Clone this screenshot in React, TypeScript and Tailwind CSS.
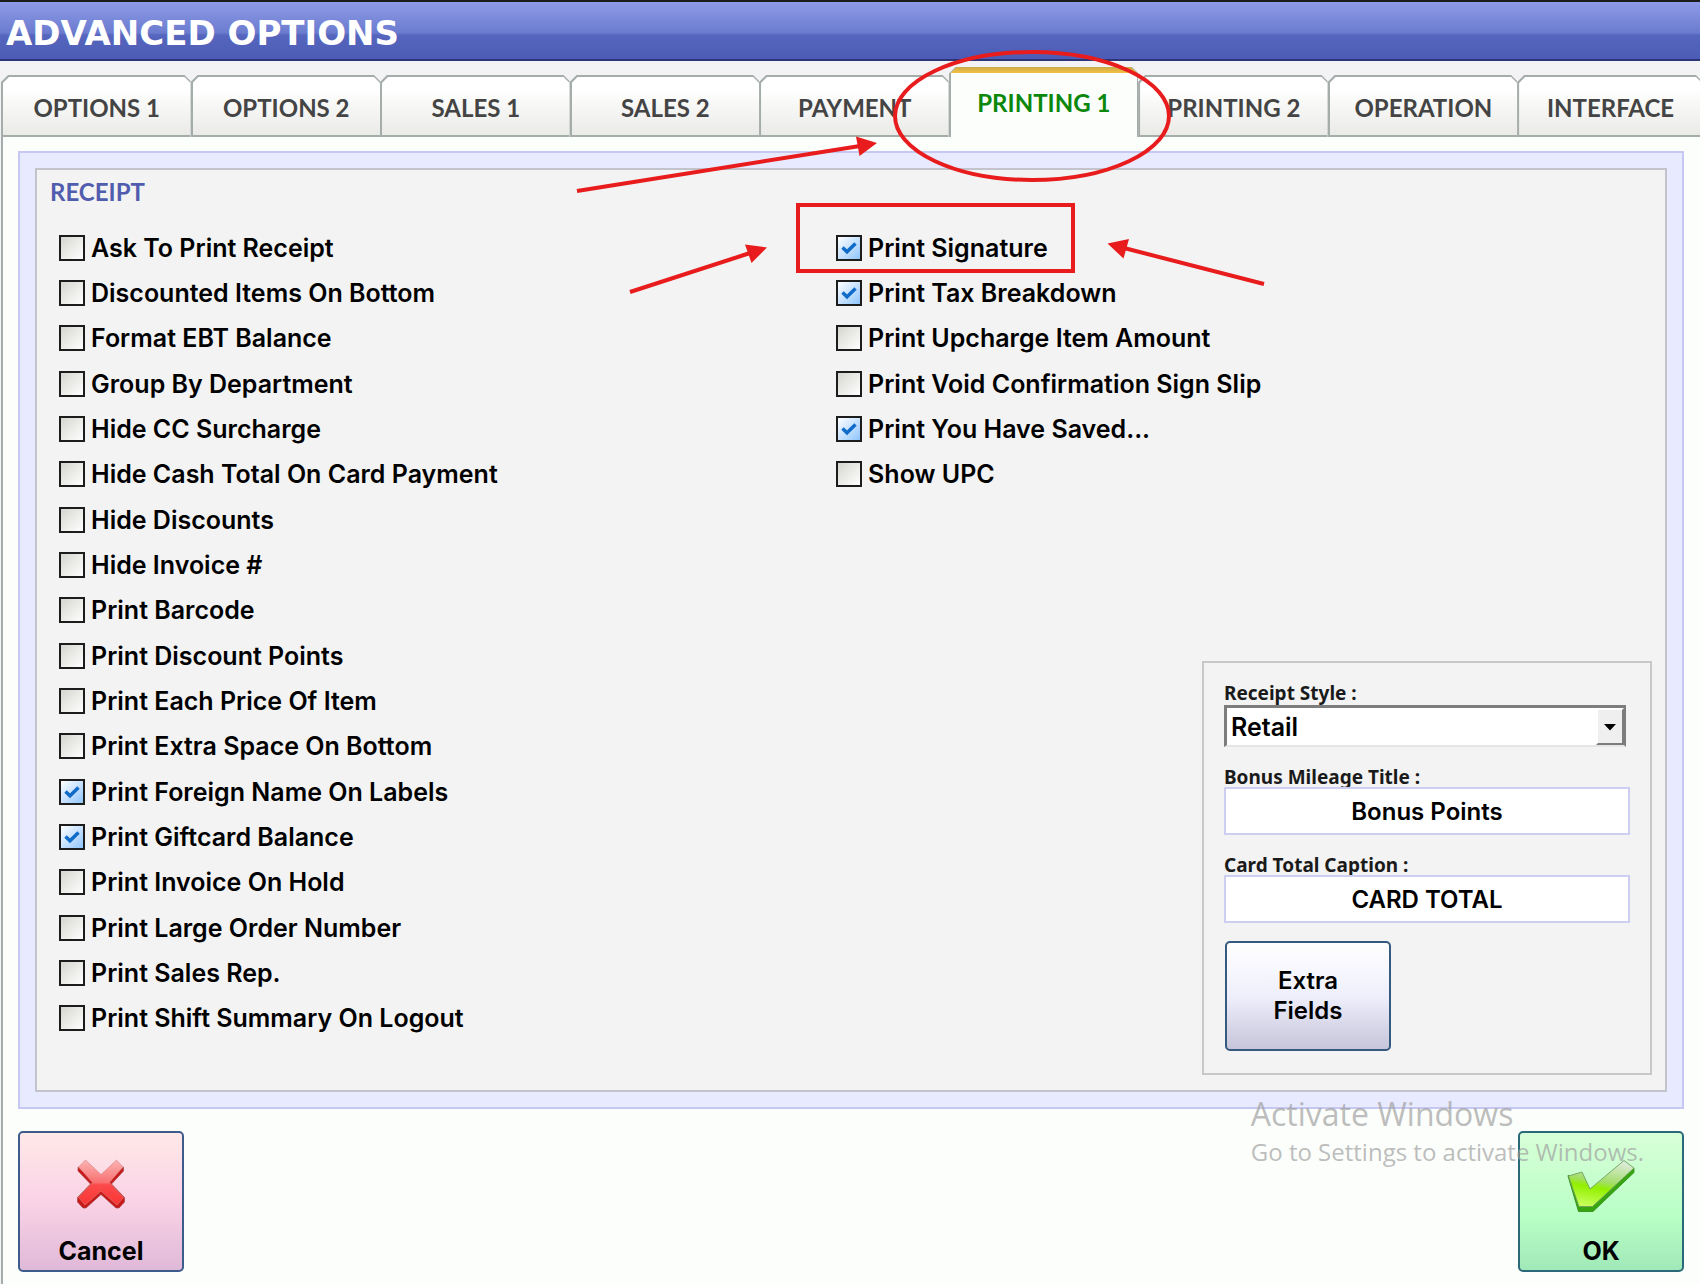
import { useState } from "react";
import clsx from "clsx";

const tabs = [
  "OPTIONS 1",
  "OPTIONS 2",
  "SALES 1",
  "SALES 2",
  "PAYMENT",
  "PRINTING 1",
  "PRINTING 2",
  "OPERATION",
  "INTERFACE",
];

const leftOptions = [
  { label: "Ask To Print Receipt", checked: false },
  { label: "Discounted Items On Bottom", checked: false },
  { label: "Format EBT Balance", checked: false },
  { label: "Group By Department", checked: false },
  { label: "Hide CC Surcharge", checked: false },
  { label: "Hide Cash Total On Card Payment", checked: false },
  { label: "Hide Discounts", checked: false },
  { label: "Hide Invoice #", checked: false },
  { label: "Print Barcode", checked: false },
  { label: "Print Discount Points", checked: false },
  { label: "Print Each Price Of Item", checked: false },
  { label: "Print Extra Space On Bottom", checked: false },
  { label: "Print Foreign Name On Labels", checked: true },
  { label: "Print Giftcard Balance", checked: true },
  { label: "Print Invoice On Hold", checked: false },
  { label: "Print Large Order Number", checked: false },
  { label: "Print Sales Rep.", checked: false },
  { label: "Print Shift Summary On Logout", checked: false },
];

const rightOptions = [
  { label: "Print Signature", checked: true },
  { label: "Print Tax Breakdown", checked: true },
  { label: "Print Upcharge Item Amount", checked: false },
  { label: "Print Void Confirmation Sign Slip", checked: false },
  { label: "Print You Have Saved...", checked: true },
  { label: "Show UPC", checked: false },
];

type Option = { label: string; checked: boolean };

function OptionRow({ label, checked }: Option) {
  return (
    <li className="flex items-center">
      <label className="flex items-center gap-[6px] text-[25px] leading-8 font-semibold whitespace-nowrap">
        <span className="relative flex">
          <input
            type="checkbox"
            defaultChecked={checked}
            className="peer size-[26px] appearance-none border-2 border-[#1c1c1c] bg-linear-to-br from-[#d6d6d0] to-white checked:from-white checked:to-[#8fc4fb]"
          />
          <svg
            viewBox="0 0 26 26"
            className="pointer-events-none absolute inset-0 hidden size-[26px] peer-checked:block"
          >
            <path
              d="M6.5 12.5 L11 16.8 L19.5 8.5"
              fill="none"
              stroke="#0f6bc8"
              strokeWidth="3.4"
            />
          </svg>
        </span>
        {label}
      </label>
    </li>
  );
}

function Tab({
  label,
  active,
  onClick,
}: {
  label: string;
  active: boolean;
  onClick: () => void;
}) {
  return (
    <button
      type="button"
      role="tab"
      aria-selected={active}
      onClick={onClick}
      className={clsx(
        "bg-[#a5adab] pl-[2px] text-2xl font-bold [clip-path:polygon(7px_0,calc(100%-6px)_0,100%_6px,100%_100%,0_100%,0_7px)]",
        active ? "h-[70px] pr-px" : "h-[62px] pt-[2px] pb-[2px]",
      )}
    >
      <span
        className={clsx(
          "flex h-full items-center justify-center [clip-path:polygon(6px_0,calc(100%-6px)_0,100%_6px,100%_100%,0_100%,0_6px)]",
          active
            ? "bg-[linear-gradient(#c9aa4c,#f6c240_6px,#fbfefb_6px)] pt-[2px] text-[#0b870b]"
            : "bg-linear-to-b from-white from-20% to-[#eaebe7] pt-1 text-[#444444]",
        )}
      >
        {label}
      </span>
    </button>
  );
}

function CancelIcon() {
  return (
    <svg width="50" height="50" viewBox="0 0 50 50">
      <defs>
        <linearGradient id="cross" x1="0" y1="0" x2="0" y2="1">
          <stop offset="0" stopColor="#fbb4b4" />
          <stop offset="0.5" stopColor="#f97070" />
          <stop offset="0.55" stopColor="#fb4a4a" />
          <stop offset="1" stopColor="#f93434" />
        </linearGradient>
      </defs>
      <path
        d="M2 8 V12 L14.500 25 L1.500 38.500 V43 L7 49 H10 L25 35.500 L40 49 H43 L48.500 43 V38.500 L35.500 25 L47.500 12 V8 L32 21 H18 Z"
        fill="#c81818"
        stroke="#a04848"
        strokeWidth="0.7"
        strokeLinejoin="round"
      />
      <path
        d="M9.500 1 L2.500 8 L16.500 23.500 L2.500 38.500 L9 46 L25 32 L41 46 L47.500 38.500 L33.500 23.500 L47 8 L40.500 1 L25 15.500 Z"
        fill="url(#cross)"
        stroke="#d98080"
        strokeWidth="0.6"
        strokeLinejoin="round"
      />
    </svg>
  );
}

function OkIcon() {
  return (
    <svg width="68" height="54" viewBox="0 0 68 54">
      <defs>
        <linearGradient id="tick" x1="0.6" y1="0" x2="0.35" y2="1">
          <stop offset="0" stopColor="#dcebd8" />
          <stop offset="0.45" stopColor="#a3dd6a" />
          <stop offset="0.6" stopColor="#93f000" />
          <stop offset="1" stopColor="#c6ff5a" />
        </linearGradient>
      </defs>
      <path
        d="M1 17 L11.500 52.500 H26 L67 13.500 V9 L26 44 H12 L1.500 16 Z"
        fill="#37a60e"
        stroke="#2d8a12"
        strokeWidth="0.8"
        strokeLinejoin="round"
      />
      <path
        d="M1.500 17 L15 13 L23 30 L57 1.500 L67 9 L25.500 47.500 H12 Z"
        fill="url(#tick)"
        stroke="#6f9f5c"
        strokeWidth="0.9"
        strokeLinejoin="round"
      />
    </svg>
  );
}

// red markup drawn over the form
function Annotations() {
  return (
    <svg
      width="1700"
      height="320"
      viewBox="0 0 1700 320"
      className="pointer-events-none absolute top-0 left-0"
    >
      <g fill="none" stroke="#e81c1c" strokeWidth="4">
        <ellipse cx="1032" cy="116" rx="137" ry="64" />
        <rect x="798" y="205" width="275" height="66" />
        <path d="M577 191 L860 146" />
        <path d="M630 292 L750 253" />
        <path d="M1264 284 L1124 248" />
      </g>
      <g fill="#e81c1c">
        <path d="M877 143 L856 136.500 L859.500 156 Z" />
        <path d="M767 247.500 L745 244.500 L751.500 263 Z" />
        <path d="M1107.500 243.500 L1129 239 L1123.500 258.500 Z" />
      </g>
    </svg>
  );
}

export default function App() {
  const [activeTab, setActiveTab] = useState("PRINTING 1");

  return (
    <div className="relative min-h-screen overflow-hidden bg-[#f3f3f5] font-['Inter','Liberation_Sans',sans-serif] text-black">
      <header className="flex h-[61px] items-center border-t-2 border-b-2 border-t-[#1c1c1c] border-b-[#2c3578] bg-[linear-gradient(#8e9be8,#6b7bce_54%,#5666be_58%,#4c5bb5)] px-1.5 pt-1">
        <h1 className="font-['DejaVu_Sans',sans-serif] text-[34px] leading-none font-bold text-white">
          ADVANCED OPTIONS
        </h1>
      </header>

      <div
        role="tablist"
        className="ml-px grid h-[76px] w-[calc(100%+1px)] grid-cols-[repeat(8,41fr)_40fr] items-end font-['Lato',sans-serif]"
      >
        {tabs.map((tab) => (
          <Tab
            key={tab}
            label={tab}
            active={tab === activeTab}
            onClick={() => setActiveTab(tab)}
          />
        ))}
      </div>

      <main className="ml-px border-b border-l-2 border-[#a5adab] border-b-[#c4c8c8] bg-[#fbfefb] pt-[14px] pr-4 pb-3 pl-[15px]">
        <section className="border-2 border-[#c6c8f2] bg-[#e8eaff] p-[15px]">
          <div className="border-2 border-[#c2c3cb] bg-[#f3f3f3] pt-[10px] pr-[13px] pb-[15px] pl-[22px]">
            <h2 className="-ml-[9px] font-['Lato',sans-serif] text-2xl leading-6 font-bold text-[#505cae]">
              RECEIPT
            </h2>
            <div className="mt-[21px] grid grid-cols-[20fr_21fr]">
              <ul className="grid h-[816px] grid-rows-18">
                {leftOptions.map((option) => (
                  <OptionRow key={option.label} {...option} />
                ))}
              </ul>

              <div className="flex h-[850px] flex-col justify-between">
                <ul className="grid h-[272px] grid-rows-6">
                  {rightOptions.map((option) => (
                    <OptionRow key={option.label} {...option} />
                  ))}
                </ul>

                {/* Receipt settings */}
                <div className="flex w-[450px] flex-col self-end border-2 border-[#c8c8c8] px-5 pt-5 pb-[22px]">
                  <label
                    htmlFor="receipt-style"
                    className="font-['Noto_Sans',sans-serif] text-[19px] leading-5 font-bold text-[#1a1a1a]"
                  >
                    Receipt Style :
                  </label>
                  <div className="relative mt-0.5 mr-1">
                    <select
                      id="receipt-style"
                      defaultValue="Retail"
                      className="h-[42px] w-full appearance-none border-t-[3px] border-r-2 border-b-2 border-l-[3px] border-[#7d7d7d] border-b-[#e6e6e6] bg-white pl-1 text-[25px] leading-8 font-semibold"
                    >
                      <option>Retail</option>
                    </select>
                    <span className="pointer-events-none absolute top-[3px] right-[2px] flex h-[37px] w-[28px] items-center justify-center border-2 border-[#7d7d7d] border-t-white border-l-white bg-[#efefef]">
                      <svg width="12" height="8" viewBox="0 0 12 8">
                        <path d="M0 1 H12 L6 7.500 Z" fill="#000" />
                      </svg>
                    </span>
                  </div>

                  <label
                    htmlFor="bonus-title"
                    className="mt-5 font-['Noto_Sans',sans-serif] text-[19px] leading-5 font-bold text-[#1a1a1a]"
                  >
                    Bonus Mileage Title :
                  </label>
                  <input
                    id="bonus-title"
                    type="text"
                    defaultValue="Bonus Points"
                    className="h-12 w-full border-2 border-[#cdcff2] bg-white text-center text-2xl font-semibold"
                  />

                  <label
                    htmlFor="card-caption"
                    className="mt-5 font-['Noto_Sans',sans-serif] text-[19px] leading-5 font-bold text-[#1a1a1a]"
                  >
                    Card Total Caption :
                  </label>
                  <input
                    id="card-caption"
                    type="text"
                    defaultValue="CARD TOTAL"
                    className="h-12 w-full border-2 border-[#cdcff2] bg-white text-center text-2xl font-semibold"
                  />

                  <button
                    type="button"
                    className="mt-[18px] ml-px h-[110px] w-[166px] rounded-[5px] border-2 border-[#35597f] bg-linear-to-b from-white via-[#efeffc] via-50% to-[#c6c5da] text-2xl leading-[30px] font-semibold"
                  >
                    Extra
                    <br />
                    Fields
                  </button>
                </div>
              </div>
            </div>
          </div>
        </section>

        <footer className="mt-[22px] flex justify-between">
          <button
            type="button"
            className="flex h-[141px] w-[166px] flex-col items-center justify-between rounded-[5px] border-2 border-[#3d5c8c] bg-linear-to-b from-[#ffe8e8] via-[#fad3e6] via-50% to-[#dfb9d8] pt-[26px] pb-[3px] text-[25px] leading-8 font-bold"
          >
            <CancelIcon />
            Cancel
          </button>
          <button
            type="button"
            className="flex h-[141px] w-[166px] flex-col items-center justify-between rounded-[5px] border-2 border-[#2a6a78] bg-linear-to-b from-[#d8ffd8] via-[#b9ffc6] via-60% to-[#a0e8b8] pt-[26px] pb-[3px] text-[25px] leading-8 font-bold"
          >
            <OkIcon />
            OK
          </button>
        </footer>
      </main>

      <div className="pointer-events-none absolute right-[56px] bottom-[115px] font-['Open_Sans',sans-serif] whitespace-nowrap text-[#a0a0a0]/70">
        <p className="text-[32px] leading-10">Activate Windows</p>
        <p className="text-2xl leading-9">Go to Settings to activate Windows.</p>
      </div>

      <Annotations />
    </div>
  );
}
